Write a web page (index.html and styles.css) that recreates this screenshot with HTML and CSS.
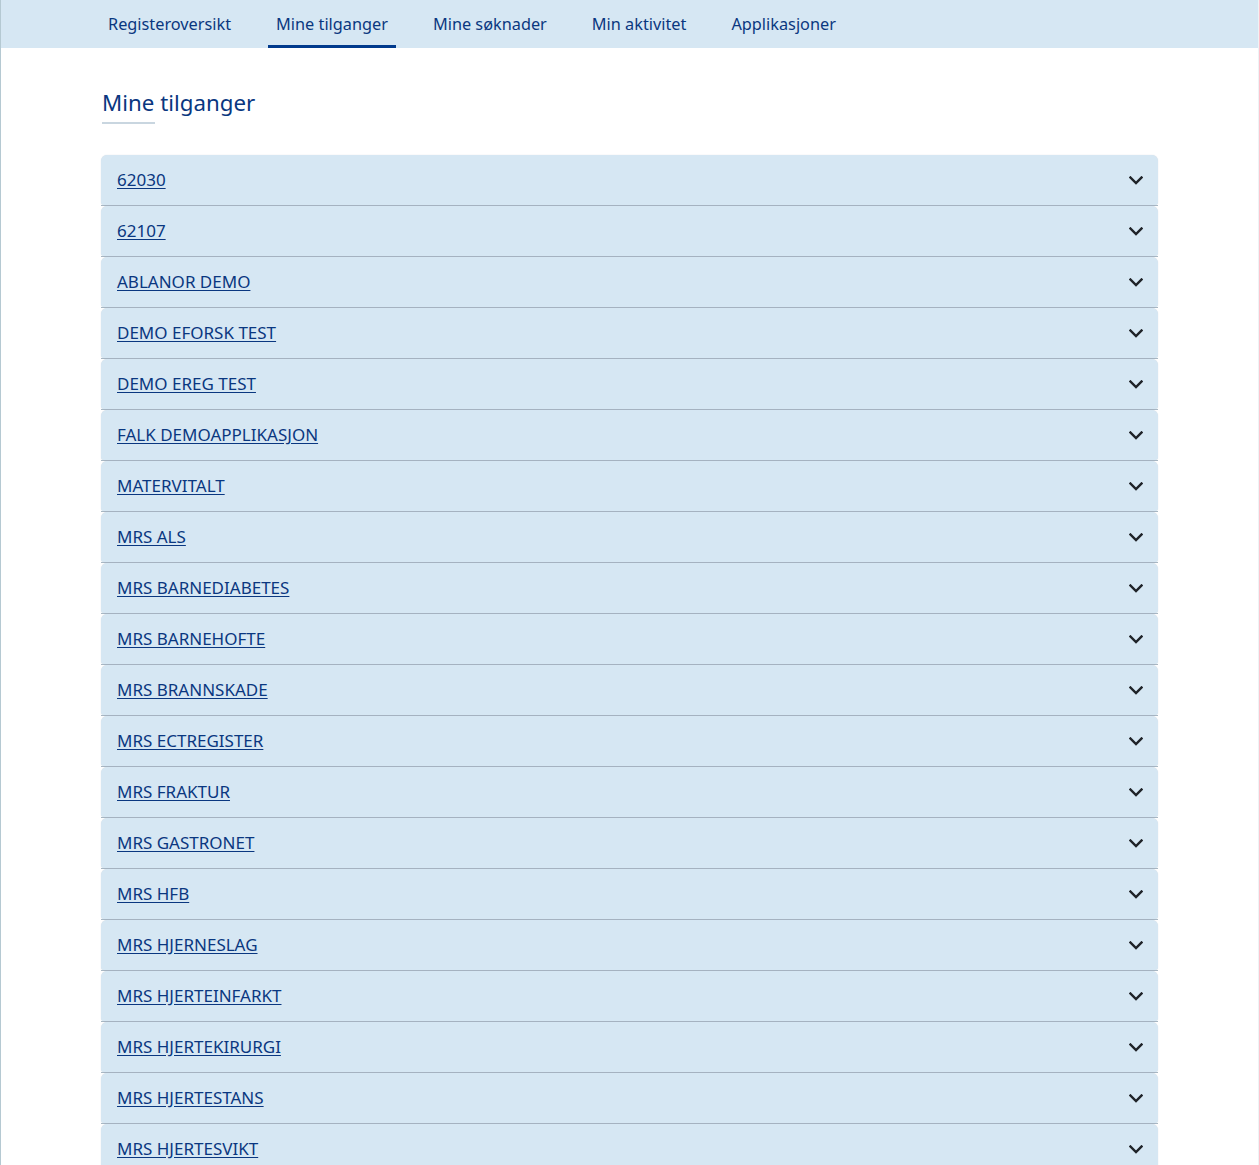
FILE: index.html
```html
<!DOCTYPE html>
<html lang="no">
<head>
<meta charset="utf-8">
<title>Mine tilganger</title>
<link rel="stylesheet" href="styles.css">
</head>
<body>
<div class="page">
  <nav class="topnav">
    <ul class="nav-list">
      <li><a class="nav-link" href="#">Registeroversikt</a></li>
      <li><a class="nav-link active" href="#">Mine tilganger</a></li>
      <li><a class="nav-link" href="#">Mine søknader</a></li>
      <li><a class="nav-link" href="#">Min aktivitet</a></li>
      <li><a class="nav-link" href="#">Applikasjoner</a></li>
    </ul>
  </nav>
  <main class="content">
    <h1 class="title">Mine tilganger</h1>
    <div class="accordion" id="acc"></div>
  </main>
</div>
<script>
  var names = ["62030","62107","ABLANOR DEMO","DEMO EFORSK TEST","DEMO EREG TEST","FALK DEMOAPPLIKASJON","MATERVITALT","MRS ALS","MRS BARNEDIABETES","MRS BARNEHOFTE","MRS BRANNSKADE","MRS ECTREGISTER","MRS FRAKTUR","MRS GASTRONET","MRS HFB","MRS HJERNESLAG","MRS HJERTEINFARKT","MRS HJERTEKIRURGI","MRS HJERTESTANS","MRS HJERTESVIKT","MRS HOFTEBRUDD","MRS KNEPROTESE"];
  var acc = document.getElementById('acc');
  names.forEach(function (n) {
    var item = document.createElement('div');
    item.className = 'acc-item';
    item.innerHTML = '<div class="acc-head"><a class="acc-link" href="#">' + n + '</a>' +
      '<svg class="chev" width="14" height="9" viewBox="0 0 14 9"><path d="M1.5 1.5 L7 7 L12.5 1.5" fill="none" stroke="#1f2328" stroke-width="2.4" stroke-linecap="square"/></svg></div>';
    acc.appendChild(item);
  });
</script>
</body>
</html>
```

FILE: styles.css
```css
html, body {
  margin: 0;
  padding: 0;
  background: #ffffff;
}
body {
  font-family: "Noto Sans", "Open Sans", sans-serif;
  color: #003283;
}
.page {
  min-height: 1165px;
  border-left: 1px solid #b5c9d2;
  border-right: 1px solid #eef2f5;
  box-sizing: border-box;
}
.topnav {
  background: #d6e7f3;
  height: 48px;
}
.nav-list {
  list-style: none;
  margin: 0;
  padding: 0 0 0 99px;
  display: flex;
  gap: 29px;
  height: 48px;
}
.nav-list li {
  display: flex;
}
.nav-link {
  display: flex;
  align-items: center;
  padding: 3px 8px 0;
  font-size: 16.3px;
  color: #0a3780;
  text-decoration: none;
  border-bottom: 3px solid transparent;
  box-sizing: border-box;
}
.nav-link.active {
  border-bottom-color: #003a8c;
}
.content {
  width: 1057px;
  margin: 0 auto;
}
.title {
  display: inline-block;
  margin: 40px 0 31px 1px;
  font-size: 22.3px;
  font-weight: 400;
  color: #0a3780;
  line-height: 30px;
  padding-bottom: 6px;
  position: relative;
}
.title::after {
  content: "";
  position: absolute;
  left: 0;
  bottom: 0;
  width: 53px;
  height: 2px;
  background: #c9d6e0;
}
.accordion {
  display: flex;
  flex-direction: column;
}
.acc-item {
  border-bottom: 1px solid #a9b8c4;
}
.acc-head {
  height: 50px;
  background: #d6e7f3;
  border-radius: 6px 6px 3px 3px;
  display: flex;
  align-items: center;
  justify-content: space-between;
  padding: 0 15px 2px 16px;
  box-sizing: border-box;
  box-shadow: 0 0 1px rgba(120, 140, 160, 0.35);
}
.acc-link {
  font-size: 17px;
  color: #0a3780;
  text-decoration: underline;
  text-underline-offset: 2px;
}
.chev {
  display: block;
  margin-top: 2px;
}
```
